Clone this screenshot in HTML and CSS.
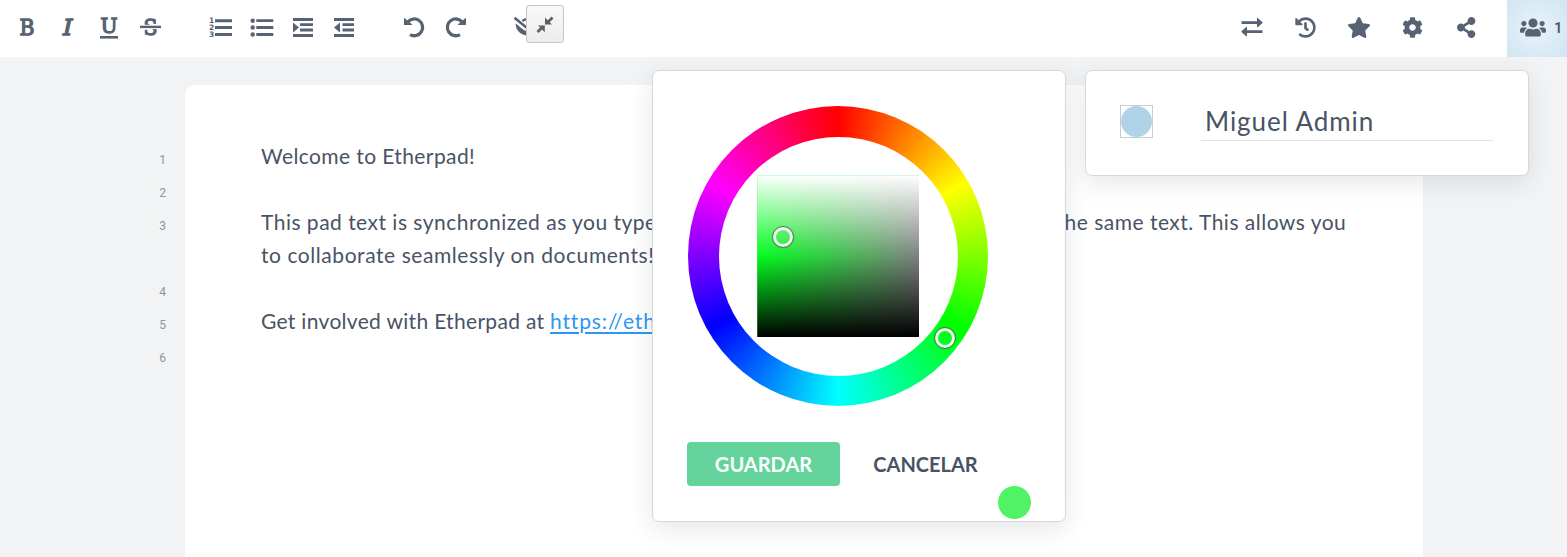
FILE: index.html
```html
<!DOCTYPE html>
<html lang="es">
<head>
<meta charset="utf-8">
<title>Etherpad</title>
<link rel="stylesheet" href="styles.css">
</head>
<body>
<div class="app">
  <header class="toolbar">
    <div class="group">
      <span class="tool"><svg width="24" height="26"><text class="slab" x="4.500" y="21.200" textLength="15" lengthAdjust="spacingAndGlyphs">B</text></svg></span>
      <span class="tool"><svg width="24" height="26"><text class="slab italic" x="7" y="21.200" textLength="9.500" lengthAdjust="spacingAndGlyphs">I</text></svg></span>
      <span class="tool"><svg width="24" height="26"><text class="slab small" x="3.500" y="19" textLength="17" lengthAdjust="spacingAndGlyphs">U</text><path d="M3 22h18v2.600H3z"/></svg></span>
      <span class="tool"><svg width="24" height="26"><text class="slab" x="4.500" y="21.200" textLength="14" lengthAdjust="spacingAndGlyphs">S</text><path class="knockout" d="M2 10.800h20v4.300H2z"/><path d="M1 11.700h21v2.400H1z"/></svg></span>
    </div>
    <div class="group">
      <span class="tool"><svg width="24" height="26"><text class="digit" x="0" y="9.300">1</text><text class="digit" x="0" y="16.300">2</text><text class="digit" x="0" y="23.300">3</text><path d="M6 5.200h17v3H6zM6 12h17v3H6zM6 19h17v3H6z"/></svg></span>
      <span class="tool"><svg width="24" height="26"><circle cx="2.700" cy="6.700" r="2.200"/><circle cx="2.700" cy="13.500" r="2.200"/><circle cx="2.700" cy="20.500" r="2.200"/><path d="M6.300 5.300h17v2.800h-17zM6.300 12.100h17v2.800h-17zM6.300 19.100h17v2.800h-17z"/></svg></span>
      <span class="tool"><svg width="24" height="26"><path d="M2 4h20v2.900H2zM9 9.200h13v2.900H9zM9 14.500h13v2.900H9zM2 20h20v2.900H2zM2 8.500l6 5-6 5z"/></svg></span>
      <span class="tool"><svg width="24" height="26"><path d="M2 4h20v2.900H2zM10.500 9.200H22v2.900H10.500zM10.500 14.500H22v2.900H10.500zM2 20h20v2.900H2zM8 8.500l-6 5 6 5z"/></svg></span>
    </div>
    <div class="group">
      <span class="tool"><svg width="24" height="26"><path class="stroke" d="M5.600 8.200A8.400 8.400 0 1 1 8 20.600"/><path d="M2 3.800V11h8.500l-3-3-2-1.500z"/></svg></span>
      <span class="tool"><svg width="24" height="26"><g transform="matrix(-1 0 0 1 24 0)"><path class="stroke" d="M5.600 8.200A8.400 8.400 0 1 1 8 20.600"/><path d="M2 3.800V11h8.500l-3-3-2-1.500z"/></g></svg></span>
    </div>
    <div class="group">
      <span class="tool"><svg width="24" height="26"><path class="eye" d="M.5 3.700l22 18M8.500 7c2-2 4.500-2.200 8-1.500"/><path d="M1.700 9.500C5 11.500 7 15 14 18v3.400C7 21.500 1.500 16.500 1.700 9.500z"/></svg></span>
    </div>
    <div class="group group-right">
      <span class="tool wide"><svg width="24" height="26"><path d="M1.500 7.200h15.500V4.200q0-.6.700-.2l4.600 4q.7.600 0 1.200l-4.600 4q-.7.400-.7-.2V10H1.500zM22.500 16.200H7v-3q0-.6-.7-.2l-4.600 4q-.7.600 0 1.200l4.600 4q.7.400.7-.2V19h15.500z"/></svg></span>
      <span class="tool wide"><svg width="21" height="21" viewBox="0 0 512 512"><path d="M504 255.531c.253 136.64-111.18 248.372-247.82 248.468-59.015.042-113.223-20.53-155.822-54.911-11.077-8.94-11.905-25.541-1.839-35.607l11.267-11.267c8.609-8.609 22.353-9.551 31.891-1.984C173.062 425.135 212.781 440 256 440c101.705 0 184-82.311 184-184 0-101.705-82.311-184-184-184-48.814 0-93.149 18.969-126.068 49.932l50.754 50.754c10.08 10.08 2.941 27.314-11.313 27.314H24c-8.837 0-16-7.163-16-16V38.627c0-14.254 17.234-21.393 27.314-11.314l49.372 49.372C129.209 34.136 189.552 8 256 8c136.81 0 247.747 110.78 248 247.531zm-180.912 78.784l9.823-12.63c8.138-10.463 6.253-25.542-4.21-33.679L288 256.349V152c0-13.255-10.745-24-24-24h-16c-13.255 0-24 10.745-24 24v135.651l65.409 50.874c10.463 8.137 25.541 6.253 33.679-4.210z"/></svg></span>
      <span class="tool wide"><svg width="24" height="21" viewBox="0 0 576 512"><path d="M259.300 17.800L194 150.200 47.900 171.500c-26.200 3.800-36.700 36.100-17.700 54.600l105.700 103-25 145.500c-4.500 26.300 23.200 46 46.400 33.700L288 439.600l130.700 68.700c23.200 12.200 50.900-7.400 46.400-33.700l-25-145.500 105.700-103c19-18.500 8.500-50.800-17.700-54.600L382 150.200 316.700 17.800c-11.700-23.600-45.600-23.900-57.400 0z"/></svg></span>
      <span class="tool wide"><svg width="21" height="21" viewBox="0 0 512 512"><path d="M487.400 315.700l-42.600-24.600c4.300-23.200 4.300-47 0-70.200l42.600-24.600c4.900-2.800 7.100-8.600 5.500-14-11.100-35.600-30-67.800-54.700-94.600-3.800-4.100-10-5.100-14.800-2.300L380.800 110c-17.900-15.400-38.500-27.300-60.800-35.100V25.800c0-5.600-3.900-10.500-9.400-11.700-36.700-8.200-74.300-7.800-109.200 0-5.500 1.200-9.400 6.100-9.400 11.700V75c-22.200 7.900-42.800 19.800-60.800 35.100L88.700 85.500c-4.900-2.800-11-1.900-14.800 2.300-24.700 26.700-43.600 58.900-54.700 94.600-1.700 5.400.6 11.200 5.500 14L67.300 221c-4.300 23.200-4.300 47 0 70.200l-42.600 24.600c-4.900 2.800-7.100 8.600-5.500 14 11.100 35.600 30 67.800 54.700 94.600 3.800 4.100 10 5.100 14.800 2.300l42.600-24.600c17.900 15.400 38.500 27.300 60.800 35.100v49.200c0 5.600 3.900 10.500 9.400 11.700 36.700 8.200 74.300 7.800 109.200 0 5.500-1.200 9.400-6.100 9.400-11.700v-49.200c22.200-7.900 42.800-19.800 60.800-35.100l42.600 24.600c4.900 2.800 11 1.900 14.800-2.300 24.700-26.700 43.600-58.900 54.700-94.600 1.500-5.500-.7-11.300-5.600-14.100zM256 336c-44.100 0-80-35.900-80-80s35.900-80 80-80 80 35.900 80 80-35.900 80-80 80z"/></svg></span>
      <span class="tool wide"><svg width="18.400" height="21" viewBox="0 0 448 512"><path d="M352 320c-22.608 0-43.387 7.819-59.790 20.895l-102.486-64.054a96.551 96.551 0 0 0 0-41.683l102.486-64.054C308.613 184.181 329.392 192 352 192c53.019 0 96-42.981 96-96S405.019 0 352 0s-96 42.981-96 96c0 7.158.79 14.130 2.276 20.841L155.790 180.895C139.387 167.819 118.608 160 96 160c-53.019 0-96 42.981-96 96s42.981 96 96 96c22.608 0 43.387-7.819 59.790-20.895l102.486 64.054A96.301 96.301 0 0 0 256 416c0 53.019 42.981 96 96 96s96-42.981 96-96-42.981-96-96-96z"/></svg></span>
    </div>
    <div class="users-btn"><svg width="26" height="21" viewBox="0 0 640 512"><path d="M96 224c35.300 0 64-28.700 64-64s-28.700-64-64-64-64 28.700-64 64 28.700 64 64 64zm448 0c35.300 0 64-28.700 64-64s-28.700-64-64-64-64 28.700-64 64 28.700 64 64 64zm32 32h-64c-17.600 0-33.500 7.100-45.100 18.600 40.300 22.100 68.900 62 75.100 109.400h66c17.700 0 32-14.300 32-32v-32c0-35.300-28.700-64-64-64zm-256 0c61.900 0 112-50.100 112-112S381.900 32 320 32 208 82.100 208 144s50.100 112 112 112zm76.800 32h-8.300c-20.800 10-43.900 16-68.500 16s-47.600-6-68.500-16h-8.300C179.600 288 128 339.600 128 403.200V432c0 26.500 21.500 48 48 48h288c26.500 0 48-21.500 48-48v-28.800c0-63.600-51.600-115.200-115.200-115.200zm-223.700-13.400C161.500 263.100 145.600 256 128 256H64c-35.300 0-64 28.700-64 64v32c0 17.700 14.300 32 32 32h65.900c6.300-47.400 34.900-87.300 75.200-109.400z"/></svg><span class="count">1</span></div>
    <button class="shrink"><svg width="18" height="18"><path d="M16.500 1.500L11 7M1.500 16L7 10.500" /><path class="head" d="M9 1.500v7h7zM2 9.500h6.800v6.800z"/></svg></button>
  </header>

  <main class="editor">
    <div class="gutter">
      <div>1</div><div>2</div><div class="two-rows">3</div><div>4</div><div>5</div><div>6</div>
    </div>
    <div class="page">
      <div class="line l1">Welcome to Etherpad!</div>
      <div class="line"></div>
      <div class="line l3">This pad text is synchronized as you type, so that everyone viewing this page sees the same text. This allows you</div>
      <div class="line l4">to collaborate seamlessly on documents!</div>
      <div class="line"></div>
      <div class="line l5">Get involved with Etherpad at <a>https://etherpad.org</a></div>
    </div>
  </main>

  <section class="popup picker">
    <div class="wheel">
      <div class="hole"><div class="square"></div></div>
      <i class="knob knob-sl"></i>
      <i class="knob knob-hue"></i>
    </div>
    <div class="actions">
      <button class="btn primary"><span>GUARDAR</span></button>
      <button class="btn"><span>CANCELAR</span></button>
    </div>
    <div class="preview"></div>
  </section>

  <section class="popup users">
    <div class="swatch"><div class="dot"></div></div>
    <div class="name"><span>Miguel Admin</span></div>
  </section>
</div>
</body>
</html>
```
FILE: styles.css
```css
* { box-sizing: border-box; }
body {
  margin: 0;
  font-family: Lato, "Open Sans", sans-serif;
  color: #485365;
  background: #f2f3f4;
}
.app {
  position: relative;
  height: 557px;
  overflow: hidden;
  display: flex;
  flex-direction: column;
}
.toolbar {
  position: relative;
  flex: none;
  height: 57px;
  background: #fff;
  display: flex;
  gap: 28.700px;
  padding-left: 6px;
}
.group { display: flex; padding-bottom: 3px; }
.group-right { margin-left: auto; margin-right: -14.400px; }
.tool {
  width: 41.300px;
  display: flex;
  align-items: center;
  justify-content: center;
}
.tool.wide { width: 53.500px; }
svg { fill: #576273; display: block; overflow: visible; }
.slab {
  font-family: "DejaVu Serif", serif;
  font-size: 23px;
  line-height: 1;
  stroke: #576273;
  stroke-width: 1.300;
}
.slab.italic { font-style: italic; }
.slab.small { font-size: 20px; }
.digit { font: bold 7.500px "DejaVu Sans", sans-serif; }
.knockout { fill: #fff; }
.stroke { fill: none; stroke: #576273; stroke-width: 3.300; }
.eye { fill: none; stroke: #576273; stroke-width: 2.600; }
.users-btn {
  width: 60px;
  display: flex;
  align-items: center;
  gap: 8px;
  padding: 0 0 3px 13px;
  background: radial-gradient(circle, #e8f2f9 0%, #d0e6f2 100%);
}
.count { font: 500 15px Roboto, sans-serif; padding-top: 1px; }
.shrink {
  position: absolute;
  left: 526px;
  top: 5px;
  width: 38px;
  height: 38px;
  padding: 1px 0 0;
  display: flex;
  align-items: center;
  justify-content: center;
  border: 1px solid #c6c6c6;
  border-radius: 3px;
  background: linear-gradient(#f8f8f8, #ededed);
}
.shrink svg { fill: #606060; stroke: #606060; stroke-width: 2.800; }
.shrink .head { stroke: none; }

.editor {
  flex: 1;
  display: grid;
  grid-template-columns: 185px 1238px 1fr;
  padding-top: 28px;
}
.gutter {
  padding: 59px 19px 0 0;
  text-align: right;
  font: 12px/33px Roboto, sans-serif;
  color: #8f9596;
}
.gutter .two-rows { height: 66px; }
.page {
  background: #fff;
  border-radius: 10px 10px 0 0;
  padding: 54px 0 0 76px;
}
.line {
  height: 33px;
  line-height: 33px;
  font-size: 21px;
  white-space: nowrap;
}
.l1 { letter-spacing: 0.400px; }
.l3 { letter-spacing: 0.485px; }
.l4 { letter-spacing: 0.560px; }
.l5 { letter-spacing: 0.310px; }
.line a {
  color: #2e96f3;
  letter-spacing: 0.850px;
  text-decoration: underline;
  text-decoration-thickness: 2px;
  text-underline-offset: 3px;
}

.popup {
  position: absolute;
  top: 70px;
  background: #fff;
  border: 1px solid #d5d7dd;
  border-radius: 7px;
  box-shadow: 0 7px 24px rgba(50, 60, 80, 0.120);
}
.picker {
  left: 652px;
  width: 414px;
  height: 452px;
  padding: 35px;
}
.wheel {
  position: relative;
  width: 300px;
  height: 300px;
  border-radius: 50%;
  padding: 30.500px;
  background: conic-gradient(#f00, #ff0, #0f0, #0ff, #00f, #f0f, #f00);
}
.hole {
  width: 239px;
  height: 239px;
  border-radius: 50%;
  background: #fff;
  display: flex;
  align-items: center;
  justify-content: center;
}
.square {
  width: 162px;
  height: 162px;
  border: solid rgba(120, 240, 130, 0.300);
  border-width: 1px 0 0 1px;
  background:
    linear-gradient(#fff, rgba(255, 255, 255, 0) 50%, rgba(0, 0, 0, 0) 50%, #000) border-box,
    linear-gradient(90deg, rgba(128, 128, 128, 0), #808080) border-box,
    #00ff1e;
}
.knob {
  position: absolute;
  width: 22px;
  height: 22px;
  border-radius: 50%;
  border: 1px solid rgba(60, 80, 60, 0.600);
  box-shadow: inset 0 0 0 3px #f4f4f4, 0 0 1px rgba(60, 80, 60, 0.500);
}
.knob-sl { left: 84px; top: 120px; }
.knob-hue { left: 246px; top: 221px; }
.actions { display: flex; padding-top: 36px; margin-left: -1px; }
.btn {
  border: 0;
  background: none;
  width: 171px;
  height: 44px;
  padding: 0;
  font: bold 20px Lato, sans-serif;
  color: #485365;
}
.primary { width: 153px; background: #64d39b; color: #fff; border-radius: 4px; }
.preview {
  position: absolute;
  left: 345px;
  top: 415px;
  width: 33px;
  height: 33px;
  border-radius: 50%;
  background: #4ff363;
}
.users {
  left: 1085px;
  width: 444px;
  height: 106px;
  padding: 34px;
  display: flex;
  gap: 48px;
}
.swatch { width: 33px; height: 33px; border: 1px solid #ccc; }
.dot { width: 31px; height: 31px; border-radius: 50%; background: #afd4e8; }
.name {
  width: 292px;
  height: 36px;
  border-bottom: 1px solid #e2e3e5;
  padding-left: 4px;
  font-size: 26px;
  line-height: 33px;
  letter-spacing: 0.950px;
}
```
